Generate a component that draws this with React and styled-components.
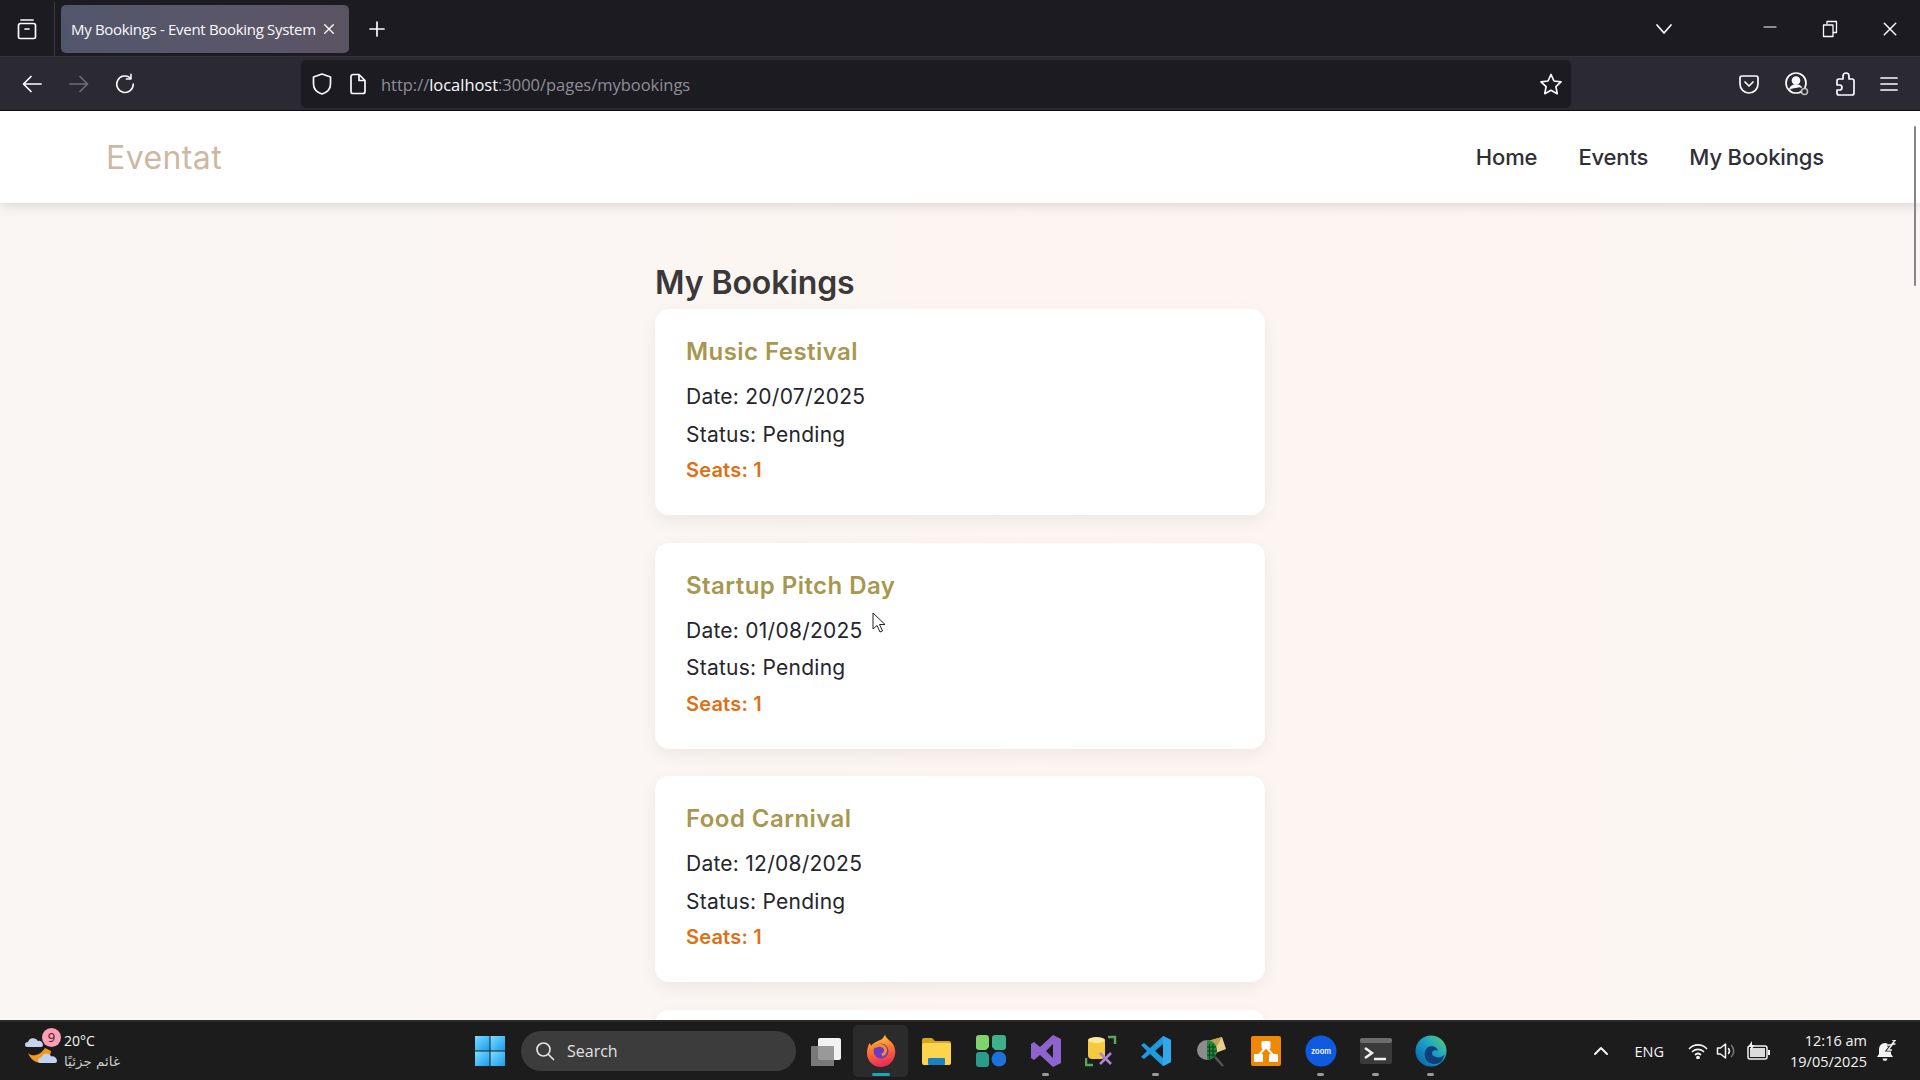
import React from 'react'
import styled, { createGlobalStyle } from 'styled-components'

const GlobalStyle = createGlobalStyle`
    html, body, #root { margin: 0; height: 100%; }
    body { overflow: hidden; background: #1c1b22; font-family: Inter, "Open Sans", sans-serif; }
    * { box-sizing: border-box; }
`
const Screen = styled.div`
    display: flex;
    flex-direction: column;
    width: 1920px;
    height: 1080px;
    overflow: hidden;
`
const TitleBar = styled.div`
    display: flex;
    align-items: center;
    height: 56px;
    padding-top: 2px;
    background: #1c1b22;
    color: #fbfbfe;
`
const TabGroups = styled.div`
    display: flex;
    align-items: center;
    justify-content: center;
    width: 55px;
    height: 54px;
    border-right: 1px solid #3a3944;
`
const Tab = styled.div`
    display: flex;
    align-items: center;
    justify-content: space-between;
    width: 288px;
    height: 48px;
    margin-left: 6px;
    padding: 0 14px 0 10px;
    border-radius: 5px;
    background: linear-gradient(90deg, #52566c, #5a566a 60%, #5a5362);
    font: 400 15px "Open Sans", sans-serif;
    letter-spacing: -0.31px;
    white-space: nowrap;
`
const NewTab = styled.div`
    display: flex;
    margin-left: 19px;
`
const WindowControls = styled.div`
    display: flex;
    align-items: center;
    margin-left: auto;
`
const TabList = styled.div`
    display: flex;
    margin-right: 67px;
`
const WindowButton = styled.div`
    display: flex;
    justify-content: center;
    width: 60px;
`
const ToolBar = styled.div`
    display: flex;
    align-items: center;
    height: 55px;
    padding: 0 0 0 21px;
    border-top: 1px solid #33323c;
    border-bottom: 1px solid #0c0c10;
    background: #2b2a33;
    color: #fbfbfe;
`
const NavButtons = styled.div`
    display: flex;
    align-items: center;
    gap: 24.5px;
    width: 280px;
`
const UrlBar = styled.div`
    display: flex;
    align-items: center;
    width: 1270px;
    height: 48px;
    padding: 0 8px 0 10px;
    border-radius: 5px;
    background: #1c1b22;
`
const UrlIcons = styled.div`
    display: flex;
    align-items: center;
    gap: 16px;
    width: 70px;
`
const UrlText = styled.div`
    padding-top: 1px;
    font: 400 16.5px "Open Sans", sans-serif;
    letter-spacing: -0.03px;
    color: #8f8e96;
    b { font-weight: 400; color: #fbfbfe; }
`
const StarWrap = styled.div`
    display: flex;
    margin-left: auto;
`
const ToolIcons = styled.div`
    display: flex;
    align-items: center;
    gap: 24px;
    margin-left: 167px;
`
const Page = styled.div`
    position: relative;
    flex: 1;
    overflow: hidden;
    background: linear-gradient(90deg, #f9f6f3 0%, #fbf6f3 30%, #fdf5f2 65%, #fbf6f3 100%);
`
const NavBar = styled.nav`
    display: flex;
    align-items: center;
    justify-content: space-between;
    height: 92px;
    padding: 0 96px 0 106px;
    background: #fff;
    box-shadow: 0 2px 12px rgba(0, 0, 0, 0.14);
`
const Brand = styled.div`
    font: 400 32px Inter, sans-serif;
    letter-spacing: 0.4px;
    color: #cdb8a3;
`
const NavLinks = styled.div`
    display: flex;
    gap: 41px;
`
const NavLink = styled.a`
    font: 500 22px Inter, sans-serif;
    letter-spacing: -0.15px;
    color: #2f2f35;
`
const Content = styled.main`
    width: 610px;
    margin: 0 auto;
    padding-top: 56px;
`
const Heading = styled.h1`
    margin: 0 0 2px;
    font: 600 32px/48px Inter, sans-serif;
    letter-spacing: -0.08px;
    color: #3a3838;
`
const CardList = styled.div`
    display: flex;
    flex-direction: column;
    gap: 27.5px;
`
const Card = styled.article`
    height: 206px;
    padding: 25px 31px 0;
    border-radius: 14px;
    background: #fff;
    box-shadow: 0 6px 18px rgba(0, 0, 0, 0.06);
`
const CardTitle = styled.h3`
    margin: 0 0 12px;
    font: 600 24px/36px Inter, sans-serif;
    letter-spacing: 0.45px;
    color: #a8974f;
`
const CardLine = styled.p`
    margin: 0 0 7.5px;
    font: 400 21px/30px Inter, sans-serif;
    letter-spacing: 0.25px;
    color: #25252d;
`
const Seats = styled.p`
    margin: -2px 0 0;
    font: 600 20px/30px Inter, sans-serif;
    letter-spacing: 0.2px;
    color: #e06f14;
`
const ScrollThumb = styled.div`
    position: absolute;
    top: 15px;
    right: 4px;
    width: 2px;
    height: 160px;
    border-radius: 1px;
    background: #85858a;
`
const Cursor = styled.svg`
    position: absolute;
    top: 501px;
    left: 872px;
`
const TaskBar = styled.div`
    display: flex;
    align-items: center;
    height: 60px;
    background: #1c1c1c;
    border-top: 2px solid #2a2927;
    color: #f4f4f4;
    font-family: "Open Sans", sans-serif;
`
const Weather = styled.div`
    display: flex;
    align-items: center;
    gap: 4px;
    width: 462px;
    padding-left: 24px;
`
const WeatherIcon = styled.div`
    position: relative;
    display: flex;
    width: 36px;
    height: 36px;
`
const Badge = styled.span`
    position: absolute;
    top: -5px;
    right: -1px;
    width: 19px;
    height: 19px;
    border-radius: 50%;
    background: #fb9fb6;
    color: #3a1a20;
    font-size: 13px;
    line-height: 19px;
    text-align: center;
`
const WeatherText = styled.div`
    display: flex;
    flex-direction: column;
    font-size: 14px;
    line-height: 20px;
    span:last-child {
        font: 400 13.5px/20px "DejaVu Sans", sans-serif;
        color: #c9c9c9;
    }
`
const Apps = styled.div`
    display: flex;
    align-items: center;
`
const SearchBox = styled.div`
    display: flex;
    align-items: center;
    gap: 12px;
    width: 275px;
    height: 40px;
    margin: 0 2px 0 4px;
    padding-left: 14px;
    border-radius: 20px;
    background: #3c3c3c;
    font-size: 16px;
    color: #e2e2e2;
`
const AppSlot = styled.div`
    position: relative;
    display: flex;
    align-items: center;
    justify-content: center;
    width: 55px;
    height: 52px;
    border-radius: 5px;
    background: ${(p) => (p.$active ? '#2b2b2b' : 'transparent')};
    &::after {
        content: '';
        display: ${(p) => (p.$running || p.$active ? 'block' : 'none')};
        position: absolute;
        bottom: 1px;
        left: 50%;
        width: ${(p) => (p.$active ? '18px' : '7px')};
        height: 3px;
        margin-left: ${(p) => (p.$active ? '-9px' : '-3.5px')};
        border-radius: 2px;
        background: ${(p) => (p.$active ? '#17a9b8' : '#9a9a9a')};
    }
`
const Tray = styled.div`
    display: flex;
    align-items: center;
    margin-left: auto;
    padding-right: 24px;
`
const Lang = styled.span`
    margin: 0 24px 0 26px;
    font-size: 14.5px;
`
const TrayIcons = styled.div`
    display: flex;
    align-items: center;
    gap: 8px;
`
const Clock = styled.div`
    margin: 0 9px 0 20px;
    font-size: 14.5px;
    line-height: 21px;
    text-align: right;
`

const stroke = { fill: 'none', stroke: 'currentColor', strokeWidth: 1.7, strokeLinecap: 'round', strokeLinejoin: 'round' }

const ArchiveIcon = () => (
    <svg width="22" height="24" viewBox="0 0 22 24" {...stroke}>
        <path d="M5 3h12M2.500 8.500a2 2 0 0 1 2-2h13a2 2 0 0 1 2 2V20a1.500 1.500 0 0 1-1.500 1.500H4A1.500 1.500 0 0 1 2.500 20zM9 12h4" />
    </svg>
)
const CloseIcon = ({ size = 14, width = 1.6 }) => (
    <svg width={size} height={size} viewBox="0 0 14 14" {...stroke} strokeWidth={width}>
        <path d="M2 2l10 10M12 2L2 12" />
    </svg>
)
const PlusIcon = () => (
    <svg width="18" height="18" viewBox="0 0 18 18" {...stroke}>
        <path d="M9 2v14M2 9h14" />
    </svg>
)
const ChevronDown = () => (
    <svg width="18" height="12" viewBox="0 0 18 12" {...stroke}>
        <path d="M2 2l7 8 7-8" />
    </svg>
)
const MinimizeIcon = () => (
    <svg width="14" height="14" viewBox="0 0 14 14" {...stroke} strokeWidth="1.2">
        <path d="M1 5h12" />
    </svg>
)
const RestoreIcon = () => (
    <svg width="16" height="18" viewBox="0 0 16 18" {...stroke} strokeWidth="1.3" strokeLinecap="butt">
        <path d="M5 4V1.500h9.500v11H11M1.500 5H11v11.500H1.500z" />
    </svg>
)
const ArrowLeft = ({ color = '#fbfbfe' }) => (
    <svg width="22" height="20" viewBox="0 0 22 20" {...stroke} stroke={color}>
        <path d="M20 10H3M10 2.500L2.500 10l7.500 7.500" />
    </svg>
)
const ArrowRight = () => (
    <svg width="22" height="20" viewBox="0 0 22 20" {...stroke} stroke="#6e6d75">
        <path d="M2 10h17M12 2.500l7.500 7.500-7.500 7.500" />
    </svg>
)
const ReloadIcon = () => (
    <svg width="22" height="24" viewBox="0 0 24 24" {...stroke}>
        <path d="M18 5.500A9 9 0 1 0 21 12M18.500 1.500v5h-5" />
    </svg>
)
const ShieldIcon = () => (
    <svg width="22" height="24" viewBox="0 0 22 24" {...stroke}>
        <path d="M11 2l8.500 3v7c0 5-4 8.500-8.500 10-4.500-1.500-8.500-5-8.500-10V5z" />
    </svg>
)
const PageIcon = () => (
    <svg width="18" height="22" viewBox="0 0 18 22" {...stroke}>
        <path d="M2 3.500A2 2 0 0 1 4 1.500h6l6 6V18.500a2 2 0 0 1-2 2H4a2 2 0 0 1-2-2zM10 1.500v6h6" />
    </svg>
)
const StarIcon = () => (
    <svg width="24" height="24" viewBox="0 0 24 24" {...stroke}>
        <path d="M12 2.500l3 6.500 7 .9-5.100 4.800 1.300 7L12 18.300l-6.200 3.400 1.300-7L2 9.900l7-.9z" />
    </svg>
)
const PocketIcon = () => (
    <svg width="22" height="22" viewBox="0 0 22 22" {...stroke}>
        <path d="M2 5a2 2 0 0 1 2-2h14a2 2 0 0 1 2 2v6a9 9 0 0 1-18 0zM7 9l4 4 4-4" />
    </svg>
)
const AccountIcon = () => (
    <svg width="26" height="26" viewBox="0 0 26 26" {...stroke}>
        <circle cx="12" cy="12" r="10" />
        <circle cx="12" cy="9.500" r="3.500" fill="currentColor" />
        <path d="M6 18c1-3 3-4 6-4s4 .8 5 2" fill="currentColor" />
        <circle cx="20.500" cy="20.500" r="3" fill="#2b2a33" stroke="#bdbdc2" strokeWidth="1.500" />
    </svg>
)
const PuzzleIcon = () => (
    <svg width="22" height="26" viewBox="0 0 22 26" {...stroke}>
        <path d="M9 8V5a3 3 0 0 1 6 0v3h3a2 2 0 0 1 2 2v12a2 2 0 0 1-2 2H5a2 2 0 0 1-2-2v-3h2.500a2.500 2.500 0 0 0 0-5H3v-4a2 2 0 0 1 2-2z" />
    </svg>
)
const MenuIcon = () => (
    <svg width="18" height="18" viewBox="0 0 18 18" {...stroke}>
        <path d="M1 3h16M1 9h16M1 15h16" />
    </svg>
)
const SearchIcon = () => (
    <svg width="20" height="20" viewBox="0 0 20 20" {...stroke}>
        <circle cx="8.500" cy="8.500" r="6.500" />
        <path d="M13.500 13.500l5 5" />
    </svg>
)
const WeatherArt = () => (
    <svg width="36" height="36" viewBox="0 0 36 36">
        <path d="M1 12a3 3 0 0 1 3-3 5.500 5.500 0 0 1 10-1 4 4 0 0 1 5 4 2 2 0 0 1-2 2H3a2 2 0 0 1-2-2z" fill="#c6d2ee" />
        <path d="M4 20c4 4 12 3 17-5l6 3c-1 13-17 17-23 2z" fill="#f29a1e" />
        <path d="M14 28a3.500 3.500 0 0 1 3.500-3.500 5.500 5.500 0 0 1 10-1 4.500 4.500 0 0 1 5.500 4.500 2 2 0 0 1-2 2H16a2 2 0 0 1-2-2z" fill="#bfd4f2" />
    </svg>
)
const WindowsLogo = () => (
    <svg width="30" height="30" viewBox="0 0 30 30">
        <defs>
            <linearGradient id="win" x1="0" y1="0" x2="1" y2="1">
                <stop offset="0" stopColor="#7cdcff" />
                <stop offset="1" stopColor="#1a9cf0" />
            </linearGradient>
        </defs>
        <rect width="14.500" height="14.500" fill="url(#win)" />
        <rect x="15.500" width="14.500" height="14.500" fill="url(#win)" />
        <rect y="15.500" width="14.500" height="14.500" fill="url(#win)" />
        <rect x="15.500" y="15.500" width="14.500" height="14.500" fill="url(#win)" />
    </svg>
)
const TaskView = () => (
    <svg width="30" height="30" viewBox="0 0 30 30">
        <rect x="7" y="2" width="23" height="22" rx="2" fill="#f2f2f2" />
        <rect x="0" y="10" width="23" height="21" rx="1" fill="#8a8a8a" fillOpacity="0.85" />
    </svg>
)
const Firefox = () => (
    <svg width="30" height="34" viewBox="0 0 30 34">
        <defs>
            <linearGradient id="fx" x1="0.3" y1="0" x2="0.5" y2="1">
                <stop offset="0" stopColor="#ffd23e" />
                <stop offset="0.45" stopColor="#ff7a2a" />
                <stop offset="1" stopColor="#e8265e" />
            </linearGradient>
        </defs>
        <path d="M19 0c0 4 5 6 8 10 3 5 3 11 0 16-3 5-8 7-12 7C7 33 1 27 1 19c0-4 1-8 3-10l1 3c1-2 3-3 5-4 4-2 8-3 9-8z" fill="url(#fx)" />
        <circle cx="15" cy="17" r="7.500" fill="#6b3bc4" />
        <path d="M8 13c4-3 9-2 11 1 1.500 2.500 0 6-3 7" fill="none" stroke="#f58a2b" strokeWidth="3" />
    </svg>
)
const Explorer = () => (
    <svg width="30" height="28" viewBox="0 0 30 28">
        <path d="M1 3a2 2 0 0 1 2-2h8l3 3h14a2 2 0 0 1 2 2v4H1z" fill="#d6a41e" />
        <rect x="1" y="6" width="29" height="22" rx="2" fill="#fbd54e" />
        <rect x="7" y="21" width="17" height="7" rx="1" fill="#1a82c4" />
    </svg>
)
const TileApp = () => (
    <svg width="30" height="32" viewBox="0 0 30 32">
        <path d="M0 3a3 3 0 0 1 3-3h7a3 3 0 0 1 3 3v9l-3 3H3a3 3 0 0 1-3-3z" fill="#7fd36c" />
        <path d="M16 3a3 3 0 0 1 3-3h8a3 3 0 0 1 3 3v9a3 3 0 0 1-3 3h-8l-3-3z" fill="#3fb08c" />
        <path d="M0 20a3 3 0 0 1 3-3h7l3 3v9a3 3 0 0 1-3 3H3a3 3 0 0 1-3-3z" fill="#2a9d8a" />
        <circle cx="23" cy="24" r="7.500" fill="#1c72d8" />
    </svg>
)
const VisualStudio = () => (
    <svg width="30" height="32" viewBox="0 0 30 32">
        <path d="M22 0l8 4v24l-8 4-13-12-6 5-3-2V9l3-2 6 5zM22 9l-7 7 7 7z" fill="#8e63cf" fillRule="evenodd" />
    </svg>
)
const DbTool = () => (
    <svg width="32" height="32" viewBox="0 0 32 32">
        <path d="M23 2h7v7M1 23v7h7" fill="none" stroke="#58a55c" strokeWidth="2.500" />
        <rect x="3" y="3" width="17" height="21" rx="4" fill="#f6c93e" />
        <ellipse cx="11.500" cy="5" rx="8.500" ry="3" fill="#fbe9a0" />
        <path d="M15 18l11 11M26 18L15 29" stroke="#a986d6" strokeWidth="2.500" />
    </svg>
)
const VsCode = () => (
    <svg width="32" height="32" viewBox="0 0 32 32">
        <path d="M23 1l8 4v22l-8 4-13-12-6 5-3-2 6-6-6-6 3-2 6 5z" fill="#1e9ae0" />
        <path d="M23 1l8 4v22l-8 4z" fill="#2fa8ec" />
        <path d="M23 9l-8 7 8 7z" fill="#1c1c1c" />
    </svg>
)
const Sniffer = () => (
    <svg width="32" height="32" viewBox="0 0 32 32">
        <path d="M13 6l14-4 4 12-13 5z" fill="#e8cf8e" />
        <path d="M13 6l9 5 5-9z" fill="#c4a255" />
        <circle cx="12" cy="15" r="10" fill="#8c8c8c" />
        <path d="M12 5a10 10 0 0 1 0 20z" fill="#1f8a3c" />
        <path d="M14.500 9v15M18 9v13M12 12h9M12 16h10M12 20h8" stroke="#0b3d18" strokeWidth="1" />
        <path d="M20 22l8 9" stroke="#555" strokeWidth="2.500" />
    </svg>
)
const DrawIo = () => (
    <svg width="30" height="30" viewBox="0 0 30 30">
        <rect width="30" height="30" rx="2" fill="#f08705" />
        <path d="M15 11L7 20M15 11l8 9" stroke="#fff" strokeWidth="2" />
        <rect x="10.500" y="5" width="9" height="8" rx="1" fill="#fff" />
        <rect x="3" y="18" width="9" height="8" rx="1" fill="#fff" />
        <rect x="18" y="18" width="9" height="8" rx="1" fill="#fff" />
    </svg>
)
const Zoom = () => (
    <svg width="32" height="32" viewBox="0 0 32 32">
        <circle cx="16" cy="16" r="15.500" fill="#0f5ae0" />
        <text x="16" y="18.500" textAnchor="middle" fontFamily="Inter, sans-serif" fontSize="7.500" fontWeight="600" fill="#fff">zoom</text>
    </svg>
)
const Terminal = () => (
    <svg width="32" height="26" viewBox="0 0 32 26">
        <rect width="32" height="26" rx="2" fill="#3a3a3a" />
        <rect width="32" height="5" rx="2" fill="#6d6d6d" />
        <path d="M5 10l7 5-7 5" fill="none" stroke="#f2f2f2" strokeWidth="2.500" />
        <path d="M14 21h12" stroke="#f2f2f2" strokeWidth="2.500" />
    </svg>
)
const Edge = () => (
    <svg width="32" height="32" viewBox="0 0 32 32">
        <defs>
            <linearGradient id="edge" x1="0" y1="1" x2="1" y2="0">
                <stop offset="0" stopColor="#0c59a4" />
                <stop offset="0.55" stopColor="#1ba1c9" />
                <stop offset="1" stopColor="#5ad36a" />
            </linearGradient>
        </defs>
        <circle cx="16" cy="16" r="15.500" fill="url(#edge)" />
        <path d="M30 19c-2 3-6 4-9 3-4-1-5-4-3-6 1-1 4-1 5 0-1-5-8-6-11-3-4 4-3 12 3 15 4 2 9 1 12-2z" fill="#0e3f78" />
    </svg>
)
const ChevronUp = () => (
    <svg width="16" height="10" viewBox="0 0 16 10" {...stroke} strokeWidth="2">
        <path d="M2 8l6-6 6 6" />
    </svg>
)
const WifiIcon = () => (
    <svg width="20" height="16" viewBox="0 0 20 16" {...stroke}>
        <path d="M1.500 5.500a12 12 0 0 1 17 0M4.500 8.500a8 8 0 0 1 11 0M7.500 11.500a4 4 0 0 1 5 0" />
        <circle cx="10" cy="14.500" r="1" fill="currentColor" />
    </svg>
)
const VolumeIcon = () => (
    <svg width="22" height="18" viewBox="0 0 22 18" {...stroke} strokeWidth="1.500">
        <path d="M1.500 6v6h3l5 4V2l-5 4zM12.500 6.500a4 4 0 0 1 0 5" />
        <path d="M15.500 3.500a8 8 0 0 1 0 11" stroke="#7a7a7a" />
    </svg>
)
const BatteryIcon = () => (
    <svg width="24" height="20" viewBox="0 0 24 20">
        <path d="M2 7a2 2 0 0 1 2-2h15a2 2 0 0 1 2 2v9a2 2 0 0 1-2 2H4a2 2 0 0 1-2-2z" fill="none" stroke="#f4f4f4" strokeWidth="1.500" />
        <rect x="4" y="7" width="15" height="9" fill="#dcdcdc" />
        <rect x="22" y="9" width="2" height="5" fill="#f4f4f4" />
        <path d="M6 0L2 6h3l-1 4 5-6H6z" fill="#f4f4f4" />
    </svg>
)
const BellIcon = () => (
    <svg width="20" height="22" viewBox="0 0 20 22" fill="#f4f4f4">
        <path d="M9 3a6 6 0 0 0-6 6v5l-2 3h16l-2-3V9a6 6 0 0 0-6-6zM6.500 18.500h5a2.500 2.500 0 0 1-5 0z" />
        <path d="M11 5h5l-4 5h4M16 0h3.500L16 4h3.500" fill="none" stroke="#1c1c1c" strokeWidth="3.200" />
        <path d="M11 5h5l-4 5h4M16 0h3.500L16 4h3.500" fill="none" stroke="#f4f4f4" strokeWidth="1.400" />
    </svg>
)

const bookings = [
    { title: 'Music Festival', date: '20/07/2025' },
    { title: 'Startup Pitch Day', date: '01/08/2025' },
    { title: 'Food Carnival', date: '12/08/2025' },
]

const apps = [
    { icon: <TaskView /> },
    { icon: <Firefox />, active: true },
    { icon: <Explorer /> },
    { icon: <TileApp /> },
    { icon: <VisualStudio />, running: true },
    { icon: <DbTool /> },
    { icon: <VsCode />, running: true },
    { icon: <Sniffer /> },
    { icon: <DrawIo /> },
    { icon: <Zoom />, running: true },
    { icon: <Terminal />, running: true },
    { icon: <Edge />, running: true },
]

export default function App() {
    return (
        <Screen>
            <GlobalStyle />
            <TitleBar>
                <TabGroups><ArchiveIcon /></TabGroups>
                <Tab>
                    My Bookings - Event Booking System
                    <CloseIcon size={12} />
                </Tab>
                <NewTab><PlusIcon /></NewTab>
                <WindowControls>
                    <TabList><ChevronDown /></TabList>
                    <WindowButton><MinimizeIcon /></WindowButton>
                    <WindowButton><RestoreIcon /></WindowButton>
                    <WindowButton><CloseIcon size={16} width={1.3} /></WindowButton>
                </WindowControls>
            </TitleBar>
            <ToolBar>
                <NavButtons>
                    <ArrowLeft />
                    <ArrowRight />
                    <ReloadIcon />
                </NavButtons>
                <UrlBar>
                    <UrlIcons>
                        <ShieldIcon />
                        <PageIcon />
                    </UrlIcons>
                    <UrlText>http://<b>localhost</b>:3000/pages/mybookings</UrlText>
                    <StarWrap><StarIcon /></StarWrap>
                </UrlBar>
                <ToolIcons>
                    <PocketIcon />
                    <AccountIcon />
                    <PuzzleIcon />
                    <MenuIcon />
                </ToolIcons>
            </ToolBar>
            <Page>
                <NavBar>
                    <Brand>Eventat</Brand>
                    <NavLinks>
                        <NavLink>Home</NavLink>
                        <NavLink>Events</NavLink>
                        <NavLink>My Bookings</NavLink>
                    </NavLinks>
                </NavBar>
                <Content>
                    <Heading>My Bookings</Heading>
                    <CardList>
                        {bookings.map(({ title, date }) => (
                            <Card key={title}>
                                <CardTitle>{title}</CardTitle>
                                <CardLine>Date: {date}</CardLine>
                                <CardLine>Status: Pending</CardLine>
                                <Seats>Seats: 1</Seats>
                            </Card>
                        ))}
                        <Card />
                    </CardList>
                </Content>
                <ScrollThumb />
                <Cursor width="14" height="22" viewBox="0 0 14 22">
                    <path d="M1 1v16l4-3.500 3 6.500 2.500-1-3-6.500H13z" fill="#fff" stroke="#222" strokeWidth="1" />
                </Cursor>
            </Page>
            <TaskBar>
                <Weather>
                    <WeatherIcon>
                        <WeatherArt />
                        <Badge>9</Badge>
                    </WeatherIcon>
                    <WeatherText>
                        <span>20°C</span>
                        <span dir="rtl">غائم جزئيًا</span>
                    </WeatherText>
                </Weather>
                <Apps>
                    <AppSlot><WindowsLogo /></AppSlot>
                    <SearchBox>
                        <SearchIcon />
                        Search
                    </SearchBox>
                    {apps.map(({ icon, active, running }, index) => (
                        <AppSlot key={index} $active={active} $running={running}>{icon}</AppSlot>
                    ))}
                </Apps>
                <Tray>
                    <ChevronUp />
                    <Lang>ENG</Lang>
                    <TrayIcons>
                        <WifiIcon />
                        <VolumeIcon />
                        <BatteryIcon />
                    </TrayIcons>
                    <Clock>12:16 am<br />19/05/2025</Clock>
                    <BellIcon />
                </Tray>
            </TaskBar>
        </Screen>
    )
}
